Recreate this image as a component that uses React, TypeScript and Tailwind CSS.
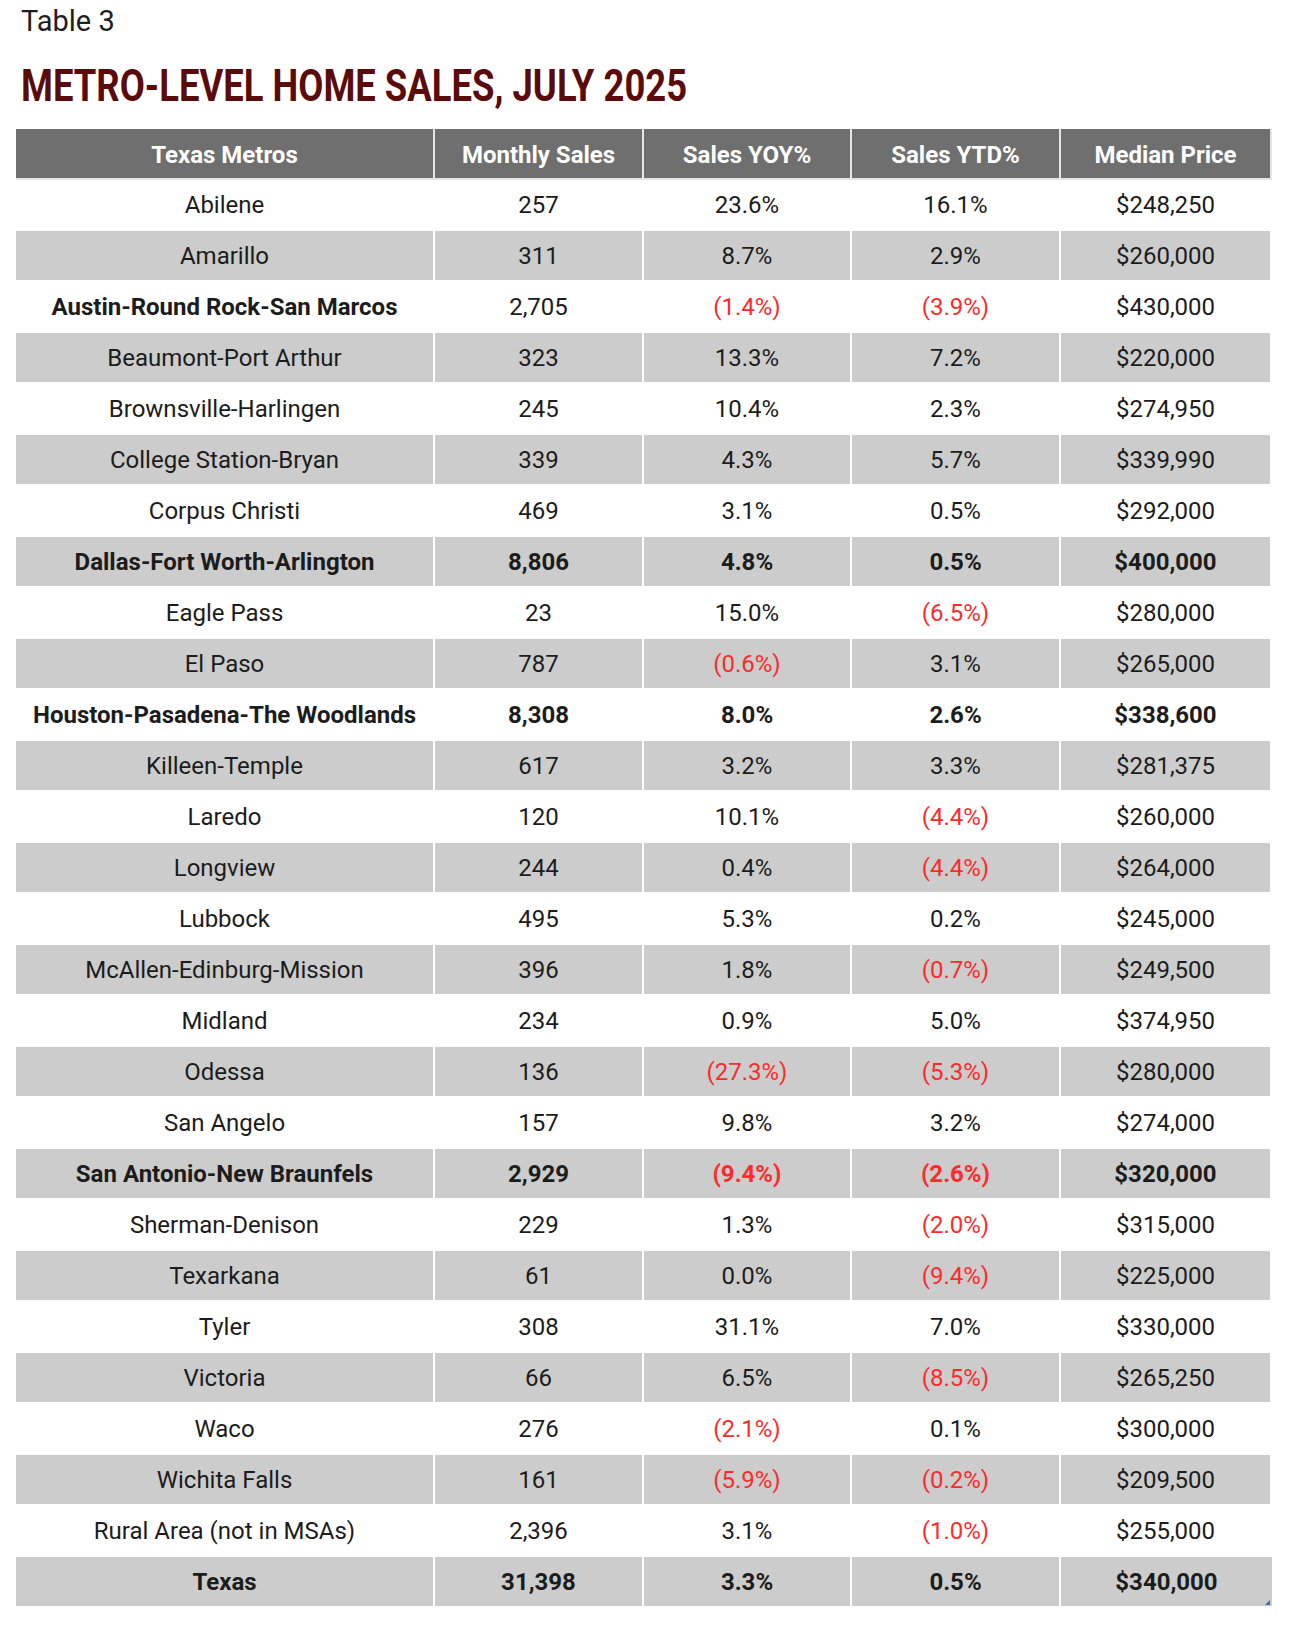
import React from "react";

type Row = {
  name: string;
  sales: string;
  yoy: string;
  ytd: string;
  price: string;
  bold?: "all" | "name";
};

const rows: Row[] = [
  { name: "Abilene", sales: "257", yoy: "23.6%", ytd: "16.1%", price: "$248,250" },
  { name: "Amarillo", sales: "311", yoy: "8.7%", ytd: "2.9%", price: "$260,000" },
  { name: "Austin-Round Rock-San Marcos", sales: "2,705", yoy: "(1.4%)", ytd: "(3.9%)", price: "$430,000", bold: "name" },
  { name: "Beaumont-Port Arthur", sales: "323", yoy: "13.3%", ytd: "7.2%", price: "$220,000" },
  { name: "Brownsville-Harlingen", sales: "245", yoy: "10.4%", ytd: "2.3%", price: "$274,950" },
  { name: "College Station-Bryan", sales: "339", yoy: "4.3%", ytd: "5.7%", price: "$339,990" },
  { name: "Corpus Christi", sales: "469", yoy: "3.1%", ytd: "0.5%", price: "$292,000" },
  { name: "Dallas-Fort Worth-Arlington", sales: "8,806", yoy: "4.8%", ytd: "0.5%", price: "$400,000", bold: "all" },
  { name: "Eagle Pass", sales: "23", yoy: "15.0%", ytd: "(6.5%)", price: "$280,000" },
  { name: "El Paso", sales: "787", yoy: "(0.6%)", ytd: "3.1%", price: "$265,000" },
  { name: "Houston-Pasadena-The Woodlands", sales: "8,308", yoy: "8.0%", ytd: "2.6%", price: "$338,600", bold: "all" },
  { name: "Killeen-Temple", sales: "617", yoy: "3.2%", ytd: "3.3%", price: "$281,375" },
  { name: "Laredo", sales: "120", yoy: "10.1%", ytd: "(4.4%)", price: "$260,000" },
  { name: "Longview", sales: "244", yoy: "0.4%", ytd: "(4.4%)", price: "$264,000" },
  { name: "Lubbock", sales: "495", yoy: "5.3%", ytd: "0.2%", price: "$245,000" },
  { name: "McAllen-Edinburg-Mission", sales: "396", yoy: "1.8%", ytd: "(0.7%)", price: "$249,500" },
  { name: "Midland", sales: "234", yoy: "0.9%", ytd: "5.0%", price: "$374,950" },
  { name: "Odessa", sales: "136", yoy: "(27.3%)", ytd: "(5.3%)", price: "$280,000" },
  { name: "San Angelo", sales: "157", yoy: "9.8%", ytd: "3.2%", price: "$274,000" },
  { name: "San Antonio-New Braunfels", sales: "2,929", yoy: "(9.4%)", ytd: "(2.6%)", price: "$320,000", bold: "all" },
  { name: "Sherman-Denison", sales: "229", yoy: "1.3%", ytd: "(2.0%)", price: "$315,000" },
  { name: "Texarkana", sales: "61", yoy: "0.0%", ytd: "(9.4%)", price: "$225,000" },
  { name: "Tyler", sales: "308", yoy: "31.1%", ytd: "7.0%", price: "$330,000" },
  { name: "Victoria", sales: "66", yoy: "6.5%", ytd: "(8.5%)", price: "$265,250" },
  { name: "Waco", sales: "276", yoy: "(2.1%)", ytd: "0.1%", price: "$300,000" },
  { name: "Wichita Falls", sales: "161", yoy: "(5.9%)", ytd: "(0.2%)", price: "$209,500" },
  { name: "Rural Area (not in MSAs)", sales: "2,396", yoy: "3.1%", ytd: "(1.0%)", price: "$255,000" },
  { name: "Texas", sales: "31,398", yoy: "3.3%", ytd: "0.5%", price: "$340,000", bold: "all" },
];

const headers = ["Texas Metros", "Monthly Sales", "Sales YOY%", "Sales YTD%", "Median Price"];

function Cell({ value, bold, stripe }: { value: string; bold: boolean; stripe: boolean }) {
  const negative = value.startsWith("(");
  return (
    <div
      className={
        "flex h-[51px] items-center justify-center border-r-2 border-b-2 border-white last:border-r-0 " +
        (stripe ? "bg-[#cccccc] " : "bg-white ") +
        (bold ? "font-bold " : "font-normal ") +
        (negative ? "text-[#ff2a2a]" : "text-[#1c1c1c]")
      }
    >
      {value}
    </div>
  );
}

export default function App() {
  return (
    <div className="min-h-[1627px] bg-white px-4 pt-1 font-['Roboto',_'Liberation_Sans',_sans-serif]">
      <div className="pl-[5px] text-[29px] leading-[34px] text-[#1e1e1e]">Table 3</div>
      <h1 className="mt-[21px] pl-[5px] text-[45px] font-bold leading-[53px] text-[#5a0b0b]">
        <span className="inline-block origin-left scale-x-[0.81] whitespace-nowrap">
          METRO-LEVEL HOME SALES, JULY 2025
        </span>
      </h1>

      <div className="relative mt-[17px] w-[1256px] text-[24px]">
        <div className="grid grid-cols-[419px_209px_208px_209px_211px]">
          {headers.map((h) => (
            <div
              key={h}
              className="flex h-[51px] items-center justify-center border-r-2 border-b-2 border-[#e6e6e6] bg-[#6f6f6f] pt-[2px] font-bold text-white last:border-r-0"
            >
              {h}
            </div>
          ))}
          {rows.map((r, i) => {
            const stripe = i % 2 === 1;
            const all = r.bold === "all";
            return (
              <React.Fragment key={r.name}>
                <Cell value={r.name} bold={all || r.bold === "name"} stripe={stripe} />
                <Cell value={r.sales} bold={all} stripe={stripe} />
                <Cell value={r.yoy} bold={all} stripe={stripe} />
                <Cell value={r.ytd} bold={all} stripe={stripe} />
                <Cell value={r.price} bold={all} stripe={stripe} />
              </React.Fragment>
            );
          })}
        </div>
        <span className="absolute bottom-[3px] right-[2px] h-0 w-0 border-b-[5px] border-l-[5px] border-b-[#3a6fb8] border-l-transparent" />
      </div>
    </div>
  );
}
